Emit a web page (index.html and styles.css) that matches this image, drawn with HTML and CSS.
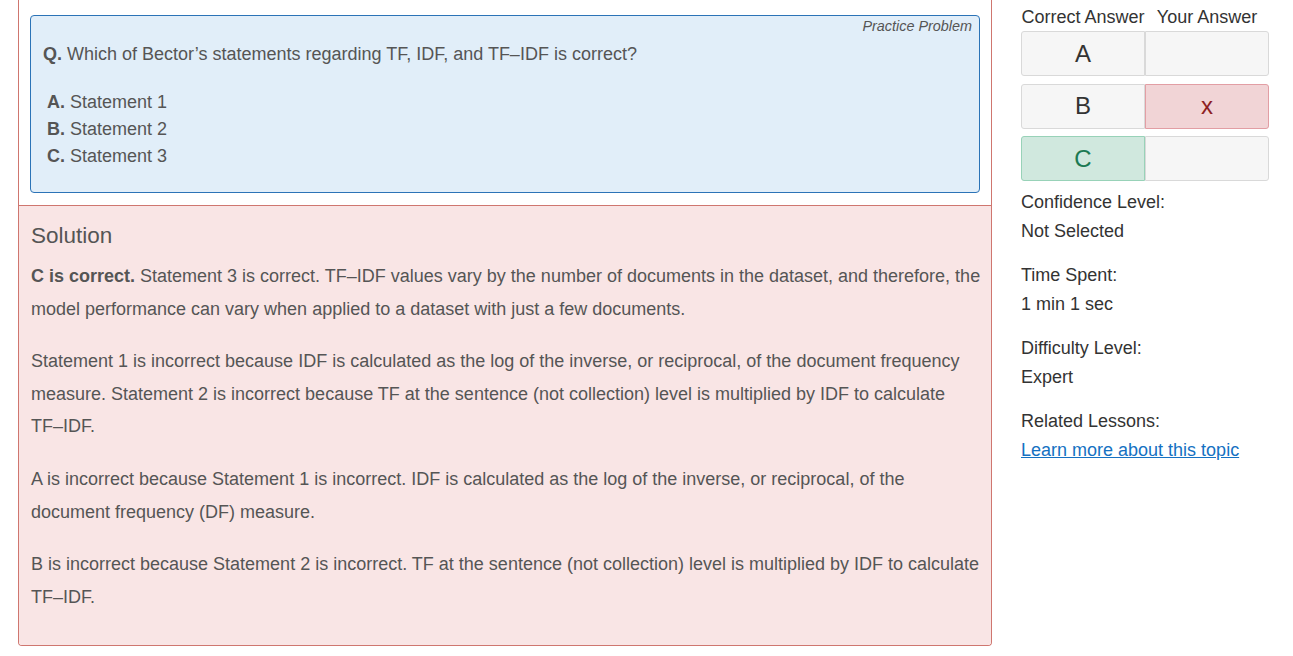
FILE: index.html
```html
<!DOCTYPE html>
<html>
<head>
<meta charset="utf-8">
<link rel="stylesheet" href="styles.css">
</head>
<body>
<div class="page">
  <div class="main">
    <div class="question-area">
      <div class="qbox">
        <div class="tag">Practice Problem</div>
        <div class="qtext"><b>Q.</b> Which of Bector’s statements regarding TF, IDF, and TF–IDF is correct?</div>
        <ul class="options">
          <li><b>A.</b> Statement 1</li>
          <li><b>B.</b> Statement 2</li>
          <li><b>C.</b> Statement 3</li>
        </ul>
      </div>
    </div>
    <div class="solution">
      <h3>Solution</h3>
      <p><b>C is correct.</b> Statement 3 is correct. TF–IDF values vary by the number of documents in the dataset, and therefore, the model performance can vary when applied to a dataset with just a few documents.</p>
      <p>Statement 1 is incorrect because IDF is calculated as the log of the inverse, or reciprocal, of the document frequency measure. Statement 2 is incorrect because TF at the sentence (not collection) level is multiplied by IDF to calculate <span class="nb">TF–IDF.</span></p>
      <p>A is incorrect because Statement 1 is incorrect. IDF is calculated as the log of the inverse, or reciprocal, of the document frequency (DF) measure.</p>
      <p>B is incorrect because Statement 2 is incorrect. TF at the sentence (not collection) level is multiplied by IDF to calculate <span class="nb">TF–IDF.</span></p>
    </div>
  </div>
  <div class="side">
    <div class="ans-head">
      <span>Correct Answer</span>
      <span>Your Answer</span>
    </div>
    <div class="ans-rows">
      <div class="ans-row">
        <div class="cell left">A</div>
        <div class="cell right"></div>
      </div>
      <div class="ans-row">
        <div class="cell left">B</div>
        <div class="cell right wrong">x</div>
      </div>
      <div class="ans-row">
        <div class="cell left correct">C</div>
        <div class="cell right"></div>
      </div>
    </div>
    <div class="info">
      <div class="label">Confidence Level:</div>
      <div class="value">Not Selected</div>
    </div>
    <div class="info">
      <div class="label">Time Spent:</div>
      <div class="value">1 min 1 sec</div>
    </div>
    <div class="info">
      <div class="label">Difficulty Level:</div>
      <div class="value">Expert</div>
    </div>
    <div class="info">
      <div class="label">Related Lessons:</div>
      <div class="value"><a href="#" class="link">Learn more about this topic</a></div>
    </div>
  </div>
</div>
</body>
</html>
```

FILE: styles.css
```css
* { box-sizing: border-box; }
html, body { margin: 0; padding: 0; background: #fff; }
body {
  font-family: "Liberation Sans", Arial, sans-serif;
  font-size: 18px;
  color: #555;
}
.page {
  display: flex;
  align-items: flex-start;
  padding-left: 18px;
  gap: 29px;
}
.main {
  width: 974px;
  flex: none;
  border: 1px solid #cf766f;
  border-top: 0;
  border-radius: 0 0 4px 4px;
  overflow: hidden;
}
.question-area {
  background: #fff;
  padding: 15px 11px 12px 11px;
}
.qbox {
  background: #e1eef9;
  border: 1px solid #2b73b7;
  border-radius: 4px;
  padding: 2px 7px 22px 12px;
}
.tag {
  text-align: right;
  font-style: italic;
  font-size: 14.4px;
  line-height: 16px;
  color: #555;
}
.qtext {
  margin-top: 6px;
  line-height: 28px;
}
.qtext b, .options b { color: #555; }
.options {
  list-style: none;
  margin: 21px 0 0 0;
  padding: 0 0 0 4px;
  line-height: 27px;
}
.nb { white-space: nowrap; }
.solution {
  background: #f9e5e5;
  border-top: 1px solid #cf766f;
  padding: 17px 9px 12px 12px;
}
.solution h3 {
  margin: 0 0 11px 0;
  font-weight: normal;
  font-size: 22.5px;
  line-height: 26px;
  color: #555;
}
.solution p {
  margin: 0 0 20px 0;
  line-height: 32.6px;
}
.side {
  width: 248px;
  flex: none;
  color: #333;
  padding-top: 5px;
}
.ans-head {
  display: grid;
  grid-template-columns: 124px 124px;
  text-align: center;
  line-height: 24px;
  white-space: nowrap;
}
.ans-rows {
  margin-top: 2px;
  display: flex;
  flex-direction: column;
  gap: 7.5px;
}
.ans-row {
  display: grid;
  grid-template-columns: 124px 124px;
}
.cell {
  height: 45px;
  background: #f6f6f6;
  border: 1px solid #d9d9d9;
  display: flex;
  align-items: center;
  justify-content: center;
  font-size: 24px;
  color: #333;
}
.cell.left { border-radius: 3px 0 0 3px; }
.cell.right { border-radius: 0 3px 3px 0; }
.cell.wrong {
  background: #f1d4d6;
  border-color: #e29ea4;
  color: #8e1f24;
}
.cell.correct {
  background: #d0e8de;
  border-color: #98d2b8;
  color: #1c7a53;
}
.info {
  line-height: 29px;
  color: #333;
  margin-bottom: 15px;
}
.ans-rows + .info { margin-top: 6.5px; }
.link {
  color: #1571c2;
  text-decoration: underline;
}
```
